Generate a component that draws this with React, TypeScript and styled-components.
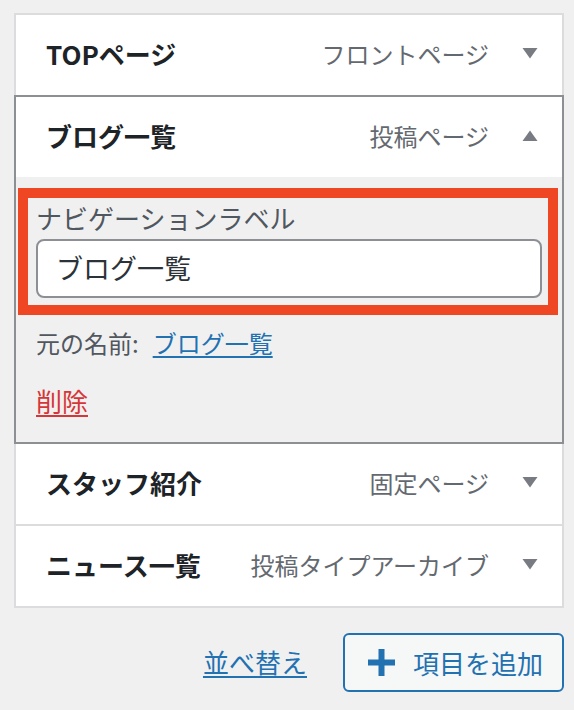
import React from "react";
import styled, { createGlobalStyle } from "styled-components";

const GlobalStyle = createGlobalStyle`
  html, body {
    margin: 0;
    padding: 0;
    background: #f0f0f1;
  }
  body {
    font-family: "Noto Sans CJK JP", "Noto Sans", sans-serif;
    -webkit-font-smoothing: antialiased;
  }
  * { box-sizing: border-box; }
`;

const Page = styled.div`
  padding: 13px 10px 0 14px;
  display: flex;
  flex-direction: column;
`;

const MenuList = styled.ul`
  list-style: none;
  margin: 0;
  padding: 0;
  display: flex;
  flex-direction: column;
`;

const Item = styled.li<{ $open?: boolean }>`
  position: relative;
  z-index: ${(p) => (p.$open ? 1 : 0)};
  border: 2px solid ${(p) => (p.$open ? "#8c8f94" : "#dcdcde")};
  background: #f0f0f1;
  & + & {
    margin-top: -2px;
  }
`;

const Header = styled.div`
  height: 80px;
  display: flex;
  align-items: center;
  background: #fff;
  padding: 0 24px 3px 30px;
`;

const Title = styled.span`
  flex: 1;
  font-size: 26px;
  font-weight: 700;
  line-height: 40px;
  color: #1d2327;
  white-space: nowrap;
`;

const TypeLabel = styled.span`
  font-size: 24px;
  line-height: 40px;
  color: #646970;
  white-space: nowrap;
`;

const ArrowBox = styled.span`
  width: 16px;
  margin-left: 33px;
  display: flex;
  align-items: center;
  justify-content: center;
`;

const Settings = styled.div`
  padding: 11px 20px 21px;
  display: flex;
  flex-direction: column;
`;

const Highlight = styled.div`
  border: 10px solid #ef4623;
  margin: 0 -16px 0 -18px;
  padding: 1px 6px 7px 8px;
  display: flex;
  flex-direction: column;
`;

const FieldLabel = styled.label`
  font-size: 26px;
  line-height: 37px;
  color: #50575e;
  margin-bottom: 3px;
  white-space: nowrap;
`;

const TextInput = styled.input`
  width: 100%;
  height: 59px;
  border: 2px solid #8c8f94;
  border-radius: 8px;
  background: #fff;
  padding: 0 18px 2px;
  font-family: "Noto Sans CJK JP", "Noto Sans", sans-serif;
  font-size: 27px;
  color: #2c3338;
  outline: none;
`;

const OriginalRow = styled.p`
  margin: 8px 0 0;
  font-size: 24px;
  line-height: 40px;
  color: #50575e;
  display: flex;
  gap: 14px;
  white-space: nowrap;
`;

const Link = styled.a<{ $danger?: boolean }>`
  color: ${(p) => (p.$danger ? "#d63638" : "#2271b1")};
  text-decoration: underline;
  text-underline-offset: 3px;
  text-decoration-thickness: 2px;
  cursor: pointer;
`;

const DeleteRow = styled.div`
  margin-top: 18px;
  font-size: 26px;
  line-height: 40px;
`;

const Actions = styled.div`
  margin-top: 25px;
  display: flex;
  justify-content: flex-end;
  align-items: center;
  gap: 36px;
`;

const ReorderLink = styled(Link)`
  font-size: 26px;
  line-height: 40px;
  white-space: nowrap;
  margin-bottom: 2px;
`;

const AddButton = styled.button`
  height: 59px;
  width: 221px;
  display: flex;
  align-items: center;
  gap: 18px;
  padding: 0 0 0 23px;
  border: 2px solid #2271b1;
  border-radius: 6px;
  background: #f6f7f7;
  color: #2271b1;
  font-family: "Noto Sans CJK JP", "Noto Sans", sans-serif;
  font-size: 26px;
  line-height: 40px;
  cursor: pointer;
  white-space: nowrap;
`;

const Arrow = ({ up }: { up?: boolean }) => (
  <svg width="16" height="11" viewBox="0 0 16 11" aria-hidden="true">
    <path
      d={up ? "M0.5 11 L8 0.5 L15.5 11 Z" : "M0.5 0 L15.5 0 L8 10.5 Z"}
      fill="#787c82"
      strokeLinejoin="round"
    />
  </svg>
);

const PlusIcon = () => (
  <svg width="27" height="27" viewBox="0 0 27 27" aria-hidden="true">
    <rect x="0" y="10.5" width="27" height="6" fill="#2271b1" />
    <rect x="10.5" y="0" width="6" height="27" fill="#2271b1" />
  </svg>
);

type MenuItem = { title: string; type: string; open?: boolean };

const items: MenuItem[] = [
  { title: "TOPページ", type: "フロントページ" },
  { title: "ブログ一覧", type: "投稿ページ", open: true },
  { title: "スタッフ紹介", type: "固定ページ" },
  { title: "ニュース一覧", type: "投稿タイプアーカイブ" },
];

export default function App() {
  return (
    <>
      <GlobalStyle />
      <Page>
        <MenuList>
          {items.map((item) => (
            <Item key={item.title} $open={item.open}>
              <Header>
                <Title>{item.title}</Title>
                <TypeLabel>{item.type}</TypeLabel>
                <ArrowBox>
                  <Arrow up={item.open} />
                </ArrowBox>
              </Header>
              {item.open && (
                <Settings>
                  <Highlight>
                    <FieldLabel htmlFor="nav-label">ナビゲーションラベル</FieldLabel>
                    <TextInput id="nav-label" readOnly value="ブログ一覧" />
                  </Highlight>
                  <OriginalRow>
                    <span>元の名前:</span>
                    <Link>ブログ一覧</Link>
                  </OriginalRow>
                  <DeleteRow>
                    <Link $danger>削除</Link>
                  </DeleteRow>
                </Settings>
              )}
            </Item>
          ))}
        </MenuList>
        <Actions>
          <ReorderLink>並べ替え</ReorderLink>
          <AddButton>
            <PlusIcon />
            項目を追加
          </AddButton>
        </Actions>
      </Page>
    </>
  );
}
